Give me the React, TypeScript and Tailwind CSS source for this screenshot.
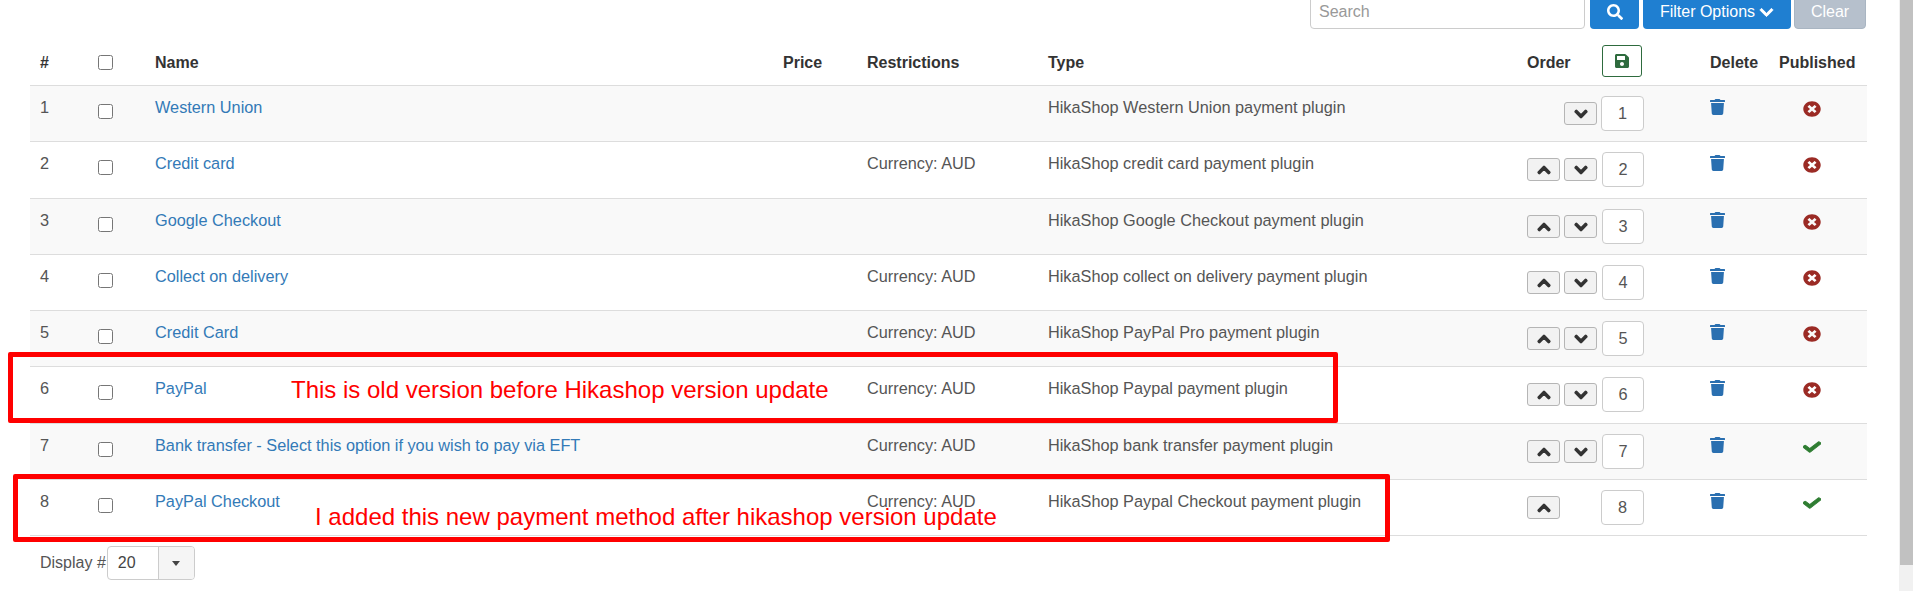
import { FaCheck, FaChevronDown, FaChevronUp, FaSave, FaSearch, FaTimesCircle, FaTrash } from "react-icons/fa";

const rows = [
  { id: 1, name: "Western Union", restriction: "", type: "HikaShop Western Union payment plugin", up: false, down: true, published: false, rowClass: "h-[56px] bg-[#f9f9f9]" },
  { id: 2, name: "Credit card", restriction: "Currency: AUD", type: "HikaShop credit card payment plugin", up: true, down: true, published: false, rowClass: "h-[57px] bg-white" },
  { id: 3, name: "Google Checkout", restriction: "", type: "HikaShop Google Checkout payment plugin", up: true, down: true, published: false, rowClass: "h-[56px] bg-[#f9f9f9]" },
  { id: 4, name: "Collect on delivery", restriction: "Currency: AUD", type: "HikaShop collect on delivery payment plugin", up: true, down: true, published: false, rowClass: "h-[56px] bg-white" },
  { id: 5, name: "Credit Card", restriction: "Currency: AUD", type: "HikaShop PayPal Pro payment plugin", up: true, down: true, published: false, rowClass: "h-[56px] bg-[#f9f9f9]" },
  { id: 6, name: "PayPal", restriction: "Currency: AUD", type: "HikaShop Paypal payment plugin", up: true, down: true, published: false, rowClass: "h-[57px] bg-white" },
  { id: 7, name: "Bank transfer - Select this option if you wish to pay via EFT", restriction: "Currency: AUD", type: "HikaShop bank transfer payment plugin", up: true, down: true, published: true, rowClass: "h-[56px] bg-[#f9f9f9]" },
  { id: 8, name: "PayPal Checkout", restriction: "Currency: AUD", type: "HikaShop Paypal Checkout payment plugin", up: true, down: false, published: true, rowClass: "h-[56px] bg-white" },
];

function OrderButton({ direction }: { direction: "up" | "down" }) {
  return (
    <button className="flex h-[23px] w-[33px] items-center justify-center rounded-[3px] border border-[#b5b5b5] bg-[#f2f2f2] text-[#333]">
      {direction === "up" ? (
        <FaChevronUp size={14} stroke="currentColor" strokeWidth={50} />
      ) : (
        <FaChevronDown size={14} stroke="currentColor" strokeWidth={50} />
      )}
    </button>
  );
}

export default function App() {
  return (
    <div className="flex h-[591px] overflow-hidden bg-white font-['Liberation_Sans',Arial,sans-serif] text-[16px] text-[#555]">
      <div className="w-[1899px] shrink-0">
        {/* top filter bar */}
        <div className="-mt-[5px] flex h-[34px] w-[1866px] justify-end">
          <input
            placeholder="Search"
            className="h-[34px] w-[275px] rounded-[4px] border border-[#ccc] bg-white px-[8px] text-[16px] placeholder:text-[#999]"
          />
          <button className="ml-[5px] flex h-[34px] w-[49px] items-center justify-center rounded-[4px] bg-[#1f7fd1] text-white">
            <FaSearch size={16} />
          </button>
          <button className="ml-[4px] flex h-[34px] w-[148px] items-center justify-center gap-[4px] rounded-[4px] bg-[#1f7fd1] text-white">
            Filter Options <FaChevronDown size={15} stroke="currentColor" strokeWidth={30} />
          </button>
          <button className="ml-[3px] h-[34px] w-[72px] rounded-[4px] border border-[#a9b5c2] bg-[#b6c0cc] text-white">Clear</button>
        </div>

        <table className="ml-[30px] mt-[7px] w-[1837px] table-fixed border-separate border-spacing-0">
          <colgroup>
            <col className="w-[58px]" />
            <col className="w-[58px]" />
            <col className="w-[627px]" />
            <col className="w-[84px]" />
            <col className="w-[181px]" />
            <col className="w-[479px]" />
            <col className="w-[184px]" />
            <col className="w-[69px]" />
            <col className="w-[97px]" />
          </colgroup>
          <thead>
            <tr className="h-[50px] text-left font-bold text-[#333]">
              <th className="border-b border-[#ddd] pl-[10px] pt-[4px]">#</th>
              <th className="border-b border-[#ddd] pl-[10px]">
                <input type="checkbox" className="mt-[4px] block h-[15px] w-[15px]" />
              </th>
              <th className="border-b border-[#ddd] pl-[9px] pt-[4px]">Name</th>
              <th className="border-b border-[#ddd] pl-[10px] pt-[4px]">Price</th>
              <th className="border-b border-[#ddd] pl-[10px] pt-[4px]">Restrictions</th>
              <th className="border-b border-[#ddd] pl-[10px] pt-[4px]">Type</th>
              <th className="border-b border-[#ddd] pl-[10px]">
                <div className="flex items-center">
                  <span className="w-[75px] pt-[4px]">Order</span>
                  <button className="flex h-[32px] w-[40px] items-center justify-center rounded-[3px] border border-[#2e6b3e] text-[#2e6b3e]">
                    <FaSave size={16} />
                  </button>
                </div>
              </th>
              <th className="border-b border-[#ddd] pl-[9px] pt-[4px]">Delete</th>
              <th className="border-b border-[#ddd] pl-[9px] pt-[4px]">Published</th>
            </tr>
          </thead>
          <tbody className="text-[16.3px]">
            {rows.map((row) => (
              <tr key={row.id} className={row.rowClass}>
                <td className="border-b border-[#ddd] pb-[13px] pl-[10px] align-middle">{row.id}</td>
                <td className="border-b border-[#ddd] pl-[10px] align-top">
                  <input type="checkbox" className="mt-[18px] block h-[15px] w-[15px]" />
                </td>
                <td className="border-b border-[#ddd] pb-[13px] pl-[9px] align-middle whitespace-nowrap">
                  <a className="text-[#337ab7]">{row.name}</a>
                </td>
                <td className="border-b border-[#ddd]"></td>
                <td className="border-b border-[#ddd] pb-[13px] pl-[10px] align-middle">{row.restriction}</td>
                <td className="border-b border-[#ddd] pb-[13px] pl-[10px] align-middle whitespace-nowrap">{row.type}</td>
                <td className="border-b border-[#ddd] pl-[10px] align-top">
                  <div className="mt-[10px] flex items-center">
                    <div className="w-[33px]">{row.up && <OrderButton direction="up" />}</div>
                    <div className="ml-[4px] w-[33px]">{row.down && <OrderButton direction="down" />}</div>
                    <div
                      className={
                        row.up && row.down
                          ? "ml-[5px] flex h-[35px] w-[42px] items-center justify-center rounded-[4px] border border-[#ccc] bg-white"
                          : "ml-[4px] flex h-[35px] w-[43px] items-center justify-center rounded-[4px] border border-[#ccc] bg-white"
                      }
                    >
                      {row.id}
                    </div>
                  </div>
                </td>
                <td className="border-b border-[#ddd] pl-[9px] align-top">
                  <FaTrash preserveAspectRatio="none" className="mt-[13px] h-[16px] w-[15px] text-[#2a6fb0]" />
                </td>
                <td className="border-b border-[#ddd] pl-[33px] align-top">
                  {row.published ? (
                    <FaCheck preserveAspectRatio="none" stroke="currentColor" strokeWidth={30} className="mt-[16px] h-[14px] w-[18px] text-[#2f7d32]" />
                  ) : (
                    <FaTimesCircle preserveAspectRatio="none" className="mt-[15px] h-[16px] w-[18px] text-[#9b2b25]" />
                  )}
                </td>
              </tr>
            ))}
          </tbody>
        </table>

        <div className="ml-[40px] mt-[10px] flex items-center">
          <span>Display #</span>
          <div className="ml-[1px] flex h-[34px] w-[88px] overflow-hidden rounded-[4px] border border-[#ccc]">
            <span className="flex w-[51px] items-center border-r border-[#ccc] pl-[10px] text-[#444]">20</span>
            <span className="flex flex-1 items-center justify-center bg-[#f5f5f5]">
              <span className="h-0 w-0 border-x-[4px] border-t-[5px] border-x-transparent border-t-[#444]" />
            </span>
          </div>
        </div>
      </div>

      {/* browser scrollbar */}
      <div className="flex-1 bg-[#f1f1f1] pl-[1px]">
        <div className="h-[565px] bg-[#c1c1c1]" />
      </div>

      {/* annotations drawn on top of the screenshot */}
      <div className="absolute left-[8px] top-[352px] h-[71px] w-[1330px] rounded-[2px] border-[5px] border-[#ff0000]" />
      <div className="absolute left-[13px] top-[474px] h-[68px] w-[1377px] rounded-[2px] border-[5px] border-[#ff0000]" />
      <span className="absolute left-[291px] top-[376px] text-[24px] leading-[28px] text-[#ff0000]">This is old version before Hikashop version update</span>
      <span className="absolute left-[315px] top-[503px] text-[24px] leading-[28px] text-[#ff0000]">I added this new payment method after hikashop version update</span>
    </div>
  );
}
